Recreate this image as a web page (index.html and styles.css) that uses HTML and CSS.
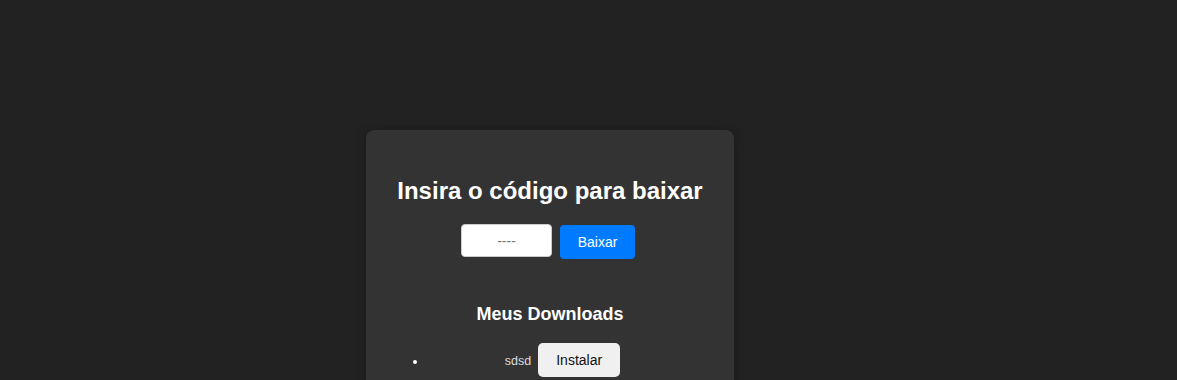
FILE: index.html
```html
<!DOCTYPE html>
<html lang="pt">
<head>
    <meta charset="UTF-8">
    <meta name="viewport" content="width=device-width, initial-scale=1.0">
    <title>Baixar</title>
    <link rel="stylesheet" href="styles.css">
</head>
<body>

<div class="container">
    <h2>Insira o código para baixar</h2>

    <div class="form-row">
        <input type="text" id="codigo" placeholder="----">
        <button class="btn-baixar">Baixar</button>
    </div>

    <h3>Meus Downloads</h3>
    <ul class="downloads">
        <li><span class="nome">sdsd</span><button class="btn-instalar">Instalar</button></li>
    </ul>
</div>

</body>
</html>
```

FILE: styles.css
```css
body {
    font-family: "Liberation Sans", Arial, sans-serif;
    margin: 0;
    padding: 0;
    background-color: #222;
    color: #fff;
}
.container {
    width: 308px;
    margin: 130px 0 0 366px;
    padding: 29px 30px 30px 30px;
    background-color: #333;
    border-radius: 8px;
    box-shadow: 0 0 10px rgba(0,0,0,0.3);
}
h2 {
    font-size: 24px;
    text-align: center;
    margin: 18px 0 19px 0;
}
.form-row {
    display: flex;
    justify-content: center;
    gap: 8px;
    margin-left: -4px;
}
input[type="text"] {
    width: 91px;
    height: 33px;
    box-sizing: border-box;
    padding: 6px;
    border: 1px solid #ccc;
    border-radius: 4px;
    text-align: center;
    font-family: "Liberation Sans", Arial, sans-serif;
    font-size: 14px;
    margin-top: 0;
}
input::placeholder {
    color: #777;
}
.btn-baixar {
    background-color: #007bff;
    color: #fff;
    border: none;
    width: 75px;
    height: 34px;
    margin-top: 1px;
    border-radius: 4px;
    font-family: "Liberation Sans", Arial, sans-serif;
    font-size: 14px;
    cursor: pointer;
}
h3 {
    font-size: 18px;
    text-align: center;
    margin: 45px 0 18px 0;
}
.downloads {
    margin: 0;
    padding-left: 31px;
}
.downloads li {
    text-align: center;
    font-size: 12.5px;
    padding-right: 6px;
}
.nome {
    color: #ddd;
    margin-right: 7px;
}
.btn-instalar {
    background-color: #f0f0f0;
    color: #111;
    border: none;
    width: 82px;
    height: 34px;
    border-radius: 5px;
    font-family: "Liberation Sans", Arial, sans-serif;
    font-size: 14px;
    cursor: pointer;
}
```
